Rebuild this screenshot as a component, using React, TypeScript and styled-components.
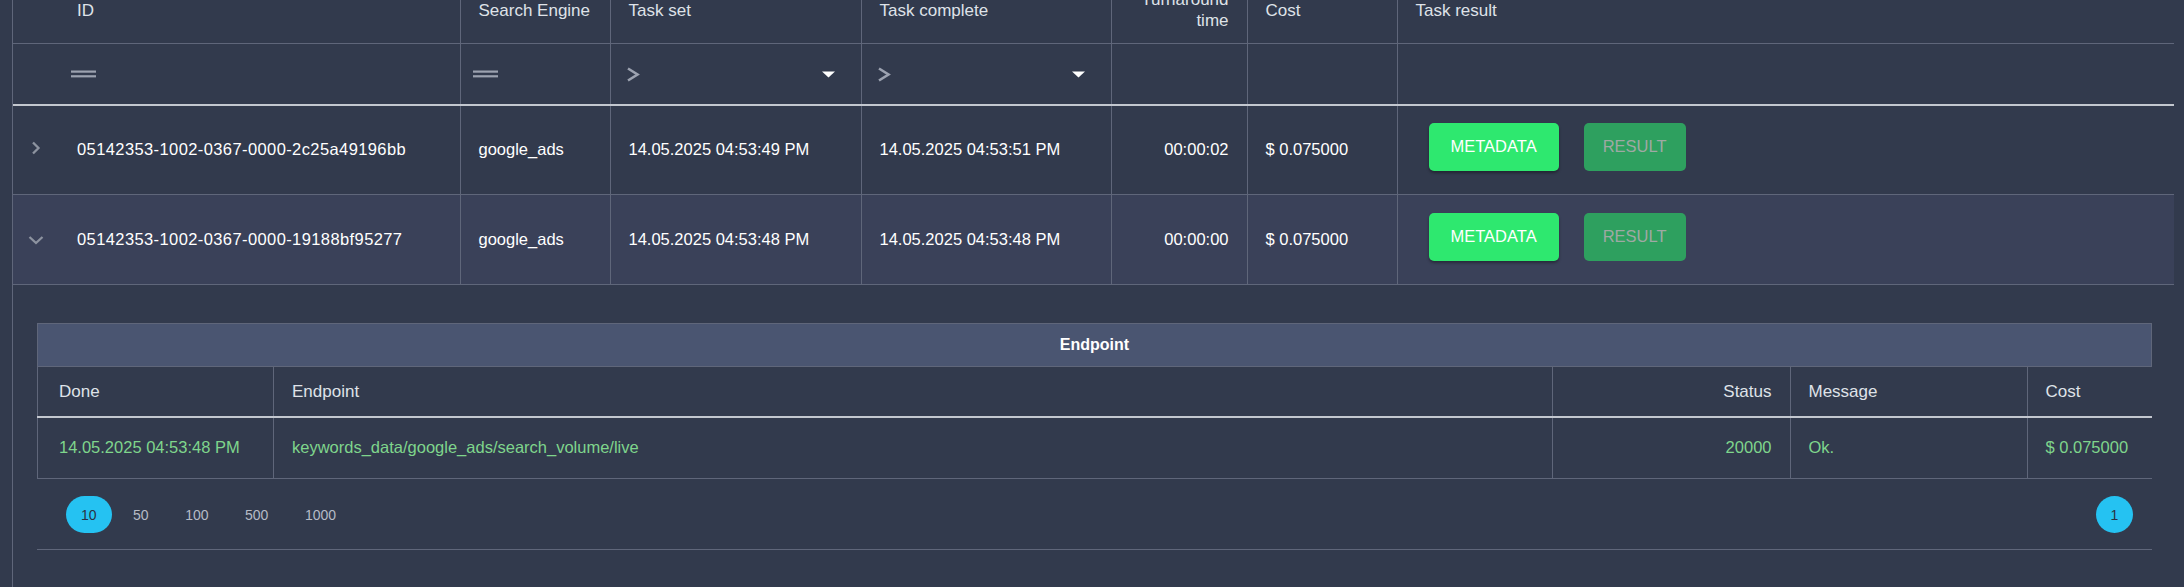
import React from "react";
import styled, { createGlobalStyle } from "styled-components";

const C = {
  bg: "#323a4d",
  rowAlt: "#3a4159",
  title: "#4a5571",
  border: "#5f667a",
  strong: "#c3c7cf",
  head: "#dfe2e8",
  text: "#ffffff",
  green: "#7fd58c",
  icon: "#9ca2b0",
};

const GlobalStyle = createGlobalStyle`
  html, body { margin: 0; padding: 0; background: ${C.bg}; overflow: hidden; }
  body { font-family: "Liberation Sans", Arial, sans-serif; }
  * { box-sizing: border-box; }
`;

const Grid = styled.div`
  margin: -23px 10px 0 12px;
  border-left: 1px solid ${C.border};
  min-height: 640px;
`;

const Table = styled.table`
  width: 100%;
  border-collapse: collapse;
  table-layout: fixed;
`;

const Th = styled.th<{ $align?: string; $noRight?: boolean }>`
  padding: 12px 18px;
  font-size: 17px;
  line-height: 21px;
  font-weight: normal;
  color: ${C.head};
  text-align: ${(p) => p.$align || "left"};
  vertical-align: middle;
  border-bottom: 1px solid ${C.border};
  border-right: ${(p) => (p.$noRight ? "none" : `1px solid ${C.border}`)};
`;

const FilterCell = styled.td<{ $noRight?: boolean; $pad?: number }>`
  height: 61px;
  padding: 1px ${(p) => p.$pad ?? 12}px 0;
  border-bottom: 2px solid ${C.strong};
  border-right: ${(p) => (p.$noRight ? "none" : `1px solid ${C.border}`)};
  vertical-align: middle;
`;

const FilterInner = styled.div`
  display: flex;
  align-items: center;
  justify-content: space-between;
  padding-right: 11px;
`;

const Row = styled.tr<{ $alt?: boolean }>`
  background: ${(p) => (p.$alt ? C.rowAlt : "transparent")};
`;

const Td = styled.td<{ $align?: string; $noRight?: boolean; $spaced?: boolean }>`
  height: 90px;
  padding: 0 18px;
  font-size: 16.5px;
  letter-spacing: ${(p) => (p.$spaced ? "0.4px" : "normal")};
  color: ${C.text};
  text-align: ${(p) => p.$align || "left"};
  vertical-align: middle;
  white-space: nowrap;
  border-bottom: 1px solid ${C.border};
  border-right: ${(p) => (p.$noRight ? "none" : `1px solid ${C.border}`)};
`;

const ExpandTd = styled(Td)`
  padding: 0;
  text-align: center;
  border-right: none;
`;

const Buttons = styled.div`
  display: flex;
  gap: 25px;
  padding-left: 13px;
  margin-bottom: 6px;
`;

const Button = styled.button<{ $disabled?: boolean }>`
  height: 48px;
  padding: 0 ${(p) => (p.$disabled ? 19 : 22)}px;
  border: none;
  border-radius: 5px;
  font-family: "Liberation Sans", Arial, sans-serif;
  font-size: 16.5px;
  background: ${(p) => (p.$disabled ? "#2ea05f" : "#2ee86f")};
  color: ${(p) => (p.$disabled ? "#9fa9a4" : "#ffffff")};
  box-shadow: ${(p) => (p.$disabled ? "none" : "0 2px 3px rgba(0,0,0,0.35)")};
  cursor: pointer;
`;

const DetailTd = styled.td`
  padding: 38px 22px 40px 24px;
`;

const TitleBar = styled.div`
  height: 44px;
  display: flex;
  align-items: center;
  justify-content: center;
  background: ${C.title};
  border: 1px solid ${C.border};
  color: #ffffff;
  font-weight: bold;
  font-size: 16px;
`;

const InnerTable = styled.table`
  width: 100%;
  border-collapse: collapse;
  table-layout: fixed;
  border-left: 1px solid ${C.border};
`;

const ITh = styled.th<{ $align?: string; $first?: boolean; $last?: boolean }>`
  height: 50px;
  padding: 0 18px 0 ${(p) => (p.$first ? 21 : 18)}px;
  font-size: 17px;
  font-weight: normal;
  color: ${C.head};
  text-align: ${(p) => p.$align || "left"};
  border-bottom: 2px solid ${C.strong};
  border-right: ${(p) => (p.$last ? "none" : `1px solid ${C.border}`)};
`;

const ITd = styled.td<{ $align?: string; $first?: boolean; $last?: boolean }>`
  height: 61px;
  padding: 0 18px 0 ${(p) => (p.$first ? 21 : 18)}px;
  font-size: 16.5px;
  color: ${C.green};
  text-align: ${(p) => p.$align || "left"};
  border-bottom: 1px solid ${C.border};
  border-right: ${(p) => (p.$last ? "none" : `1px solid ${C.border}`)};
  white-space: nowrap;
`;

const Pager = styled.div`
  height: 71px;
  display: flex;
  align-items: center;
  justify-content: space-between;
  padding: 2px 19px 0 29px;
  border-bottom: 1px solid ${C.border};
`;

const Sizes = styled.div`
  display: flex;
  gap: 6.5px;
`;

const Pill = styled.div<{ $active?: boolean }>`
  height: 37px;
  min-width: 37px;
  padding: 0 15px;
  border-radius: 19px;
  display: flex;
  align-items: center;
  justify-content: center;
  font-size: 14px;
  color: ${(p) => (p.$active ? "#2a3244" : "#b6bbc6")};
  background: ${(p) => (p.$active ? "#25c2f2" : "transparent")};
`;

const PageNum = styled(Pill)`
  padding: 0;
  width: 37px;
`;

const ChevronRight = () => (
  <svg width="10" height="14" viewBox="0 0 10 14">
    <path d="M2 1.5 L7.5 7 L2 12.5" fill="none" stroke="#8d93a0" strokeWidth="2.3" />
  </svg>
);

const ChevronDown = () => (
  <svg width="16" height="10" viewBox="0 0 16 10">
    <path d="M1.5 2 L8 8 L14.5 2" fill="none" stroke="#8d93a0" strokeWidth="2.3" />
  </svg>
);

const EqualsIcon = () => (
  <svg width="25" height="8" viewBox="0 0 25 8" style={{ display: "block" }}>
    <rect x="0" y="0.5" width="25" height="2.2" fill={C.icon} />
    <rect x="0" y="5.2" width="25" height="2.2" fill={C.icon} />
  </svg>
);

const GreaterIcon = () => (
  <svg width="14" height="15" viewBox="0 0 14 15" style={{ display: "block" }}>
    <path d="M2 1.5 L11.5 7.5 L2 13.5" fill="none" stroke={C.icon} strokeWidth="2.6" />
  </svg>
);

const Triangle = () => (
  <svg width="13" height="7" viewBox="0 0 13 7" style={{ display: "block" }}>
    <polygon points="0,0.5 13,0.5 6.5,6.5" fill="#ffffff" />
  </svg>
);

type Task = {
  id: string;
  engine: string;
  set: string;
  complete: string;
  turnaround: string;
  cost: string;
  expanded: boolean;
};

const tasks: Task[] = [
  {
    id: "05142353-1002-0367-0000-2c25a49196bb",
    engine: "google_ads",
    set: "14.05.2025 04:53:49 PM",
    complete: "14.05.2025 04:53:51 PM",
    turnaround: "00:00:02",
    cost: "$ 0.075000",
    expanded: false,
  },
  {
    id: "05142353-1002-0367-0000-19188bf95277",
    engine: "google_ads",
    set: "14.05.2025 04:53:48 PM",
    complete: "14.05.2025 04:53:48 PM",
    turnaround: "00:00:00",
    cost: "$ 0.075000",
    expanded: true,
  },
];

const Detail = () => (
  <div>
    <TitleBar>Endpoint</TitleBar>
    <InnerTable>
      <colgroup>
        <col style={{ width: 236 }} />
        <col />
        <col style={{ width: 238 }} />
        <col style={{ width: 237 }} />
        <col style={{ width: 125 }} />
      </colgroup>
      <thead>
        <tr>
          <ITh $first>Done</ITh>
          <ITh>Endpoint</ITh>
          <ITh $align="right">Status</ITh>
          <ITh>Message</ITh>
          <ITh $last>Cost</ITh>
        </tr>
      </thead>
      <tbody>
        <tr>
          <ITd $first>14.05.2025 04:53:48 PM</ITd>
          <ITd>keywords_data/google_ads/search_volume/live</ITd>
          <ITd $align="right">20000</ITd>
          <ITd>Ok.</ITd>
          <ITd $last>$ 0.075000</ITd>
        </tr>
      </tbody>
    </InnerTable>
    <Pager>
      <Sizes>
        {["10", "50", "100", "500", "1000"].map((s, i) => (
          <Pill key={s} $active={i === 0}>
            {s}
          </Pill>
        ))}
      </Sizes>
      <PageNum $active>1</PageNum>
    </Pager>
  </div>
);

export default function App() {
  return (
    <>
      <GlobalStyle />
      <Grid>
        <Table>
          <colgroup>
            <col style={{ width: 46 }} />
            <col style={{ width: 401 }} />
            <col style={{ width: 150 }} />
            <col style={{ width: 251 }} />
            <col style={{ width: 250 }} />
            <col style={{ width: 136 }} />
            <col style={{ width: 150 }} />
            <col />
          </colgroup>
          <thead>
            <tr>
              <Th $noRight />
              <Th>ID</Th>
              <Th>Search Engine</Th>
              <Th>Task set</Th>
              <Th>Task complete</Th>
              <Th $align="right">Turnaround time</Th>
              <Th>Cost</Th>
              <Th $noRight>Task result</Th>
            </tr>
            <tr>
              <FilterCell $noRight />
              <FilterCell>
                <EqualsIcon />
              </FilterCell>
              <FilterCell>
                <EqualsIcon />
              </FilterCell>
              <FilterCell $pad={15}>
                <FilterInner>
                  <GreaterIcon />
                  <Triangle />
                </FilterInner>
              </FilterCell>
              <FilterCell $pad={15}>
                <FilterInner>
                  <GreaterIcon />
                  <Triangle />
                </FilterInner>
              </FilterCell>
              <FilterCell />
              <FilterCell />
              <FilterCell $noRight />
            </tr>
          </thead>
          <tbody>
            {tasks.map((t) => (
              <React.Fragment key={t.id}>
                <Row $alt={t.expanded}>
                  <ExpandTd>{t.expanded ? <ChevronDown /> : <ChevronRight />}</ExpandTd>
                  <Td $spaced>{t.id}</Td>
                  <Td>{t.engine}</Td>
                  <Td>{t.set}</Td>
                  <Td>{t.complete}</Td>
                  <Td $align="right">{t.turnaround}</Td>
                  <Td>{t.cost}</Td>
                  <Td $noRight>
                    <Buttons>
                      <Button>METADATA</Button>
                      <Button $disabled>RESULT</Button>
                    </Buttons>
                  </Td>
                </Row>
                {t.expanded && (
                  <tr>
                    <DetailTd colSpan={8}>
                      <Detail />
                    </DetailTd>
                  </tr>
                )}
              </React.Fragment>
            ))}
          </tbody>
        </Table>
      </Grid>
    </>
  );
}
